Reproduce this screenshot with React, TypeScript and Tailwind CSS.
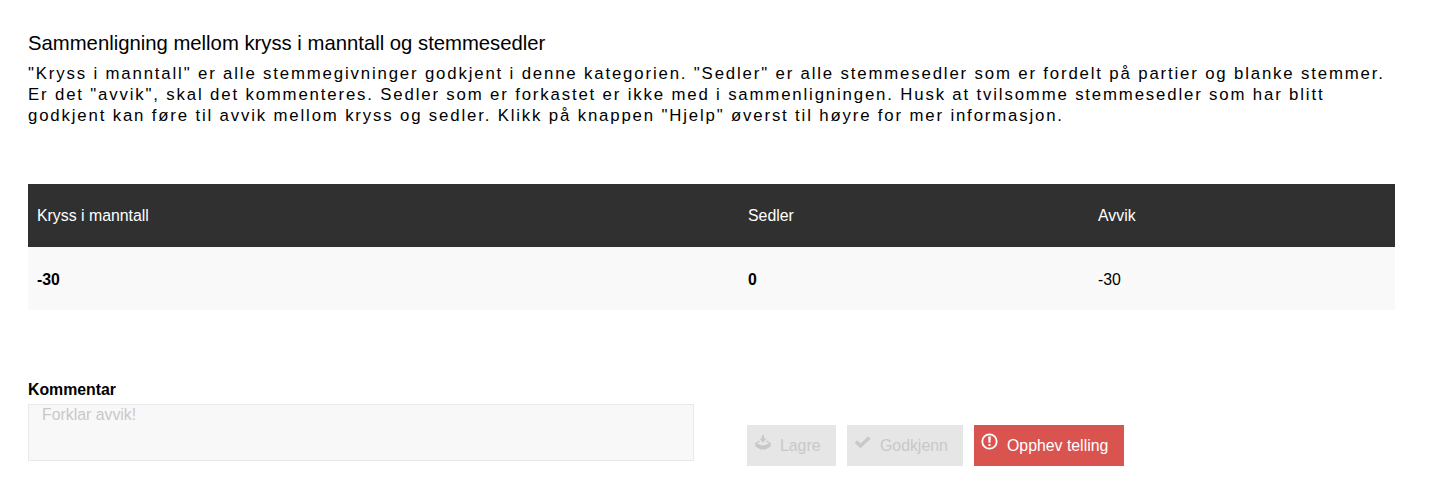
import React from "react";

function SaveIcon() {
  return (
    <svg className="h-[16px] w-[16px]" viewBox="0 0 16 16" fill="none" stroke="currentColor">
      <path d="M8 0v4" strokeWidth="2" />
      <path d="M4.500 3.500h7L8 7.500z" fill="currentColor" stroke="none" />
      <path d="M4.500 6L1 8.500l4.500 2.300h5L15 8.500 11.500 6" strokeWidth="1.300" />
      <path d="M.4 8.500l5.200 2.600h4.800l5.200-2.600v3L10.500 14.500h-5L.4 11.500z" fill="currentColor" stroke="none" />
    </svg>
  );
}

function CheckIcon() {
  return (
    <svg className="h-[16px] w-[16px]" viewBox="0 0 16 16" fill="none" stroke="currentColor" strokeWidth="3.400">
      <path d="M1 6.500l4.500 4.500 9-8.500" />
    </svg>
  );
}

function AlertIcon() {
  return (
    <svg className="h-[17px] w-[17px]" viewBox="0 0 17 17" fill="none" stroke="currentColor">
      <circle cx="8.500" cy="8.500" r="7.200" strokeWidth="1.800" />
      <path d="M7.200 3.500h2.600l-.3 6.300h-2z" fill="currentColor" stroke="none" />
      <path d="M7.500 11h2v2h-2z" fill="currentColor" stroke="none" />
    </svg>
  );
}

export default function App() {
  return (
    <main className="h-[493px] w-[1440px] overflow-hidden bg-white pl-7 pt-[30px] font-['Liberation_Sans',Arial,sans-serif] text-black">
      <h1 className="h-[34px] whitespace-nowrap text-[20.3px] leading-[26px]">
        Sammenligning mellom kryss i manntall og stemmesedler
      </h1>
      <p className="h-[120px] whitespace-nowrap text-[16.8px] leading-[20.8px] tracking-[1.84px]">
        "Kryss i manntall" er alle stemmegivninger godkjent i denne kategorien. "Sedler" er alle stemmesedler som er fordelt på partier og blanke stemmer.
        <br />
        Er det "avvik", skal det kommenteres. Sedler som er forkastet er ikke med i sammenligningen. Husk at tvilsomme stemmesedler som har blitt
        <br />
        godkjent kan føre til avvik mellom kryss og sedler. Klikk på knappen "Hjelp" øverst til høyre for mer informasjon.
      </p>

      <table className="w-[1367px] table-fixed border-collapse text-left text-[15.85px] leading-5">
        <colgroup>
          <col className="w-[711px]" />
          <col className="w-[350px]" />
          <col />
        </colgroup>
        <thead>
          <tr className="h-[63px] bg-[#303030] text-white">
            <th className="pl-[9px] font-normal">Kryss i manntall</th>
            <th className="pl-[9px] font-normal">Sedler</th>
            <th className="pl-[9px] font-normal">Avvik</th>
          </tr>
        </thead>
        <tbody>
          <tr className="h-[63px] bg-[#f9f9f9]">
            <td className="pl-[9px] pt-0.5 font-bold">-30</td>
            <td className="pl-[9px] pt-0.5 font-bold">0</td>
            <td className="pl-[9px] pt-0.5">-30</td>
          </tr>
        </tbody>
      </table>

      <section className="flex pt-[70px] text-[15.85px]">
        <div className="w-[666px]">
          <label htmlFor="comment" className="block h-6 font-bold leading-5">Kommentar</label>
          <textarea
            id="comment"
            placeholder="Forklar avvik!"
            className="block h-[57px] w-full resize-none border border-[#e9e9e9] bg-[#f8f8f8] px-[13px] py-0 leading-[19px] outline-none placeholder:text-[#c8c8c8]"
          />
        </div>
        <div className="ml-[53px] mt-[45px] flex h-[41px] whitespace-nowrap leading-[41px]">
          <button disabled className="flex w-[89px] bg-[#e6e6e6] pl-2 text-[#c8c8c8]">
            <span className="mr-[9px] mt-[10px]"><SaveIcon /></span>
            Lagre
          </button>
          <button disabled className="ml-[11px] flex w-[116px] bg-[#e6e6e6] pl-2 text-[#c8c8c8]">
            <span className="mr-[9px] mt-[10px]"><CheckIcon /></span>
            Godkjenn
          </button>
          <button className="ml-[11px] flex w-[150px] bg-[#d9534f] pl-[7px] text-white">
            <span className="mr-[9px] mt-[8px]"><AlertIcon /></span>
            Opphev telling
          </button>
        </div>
      </section>
    </main>
  );
}
